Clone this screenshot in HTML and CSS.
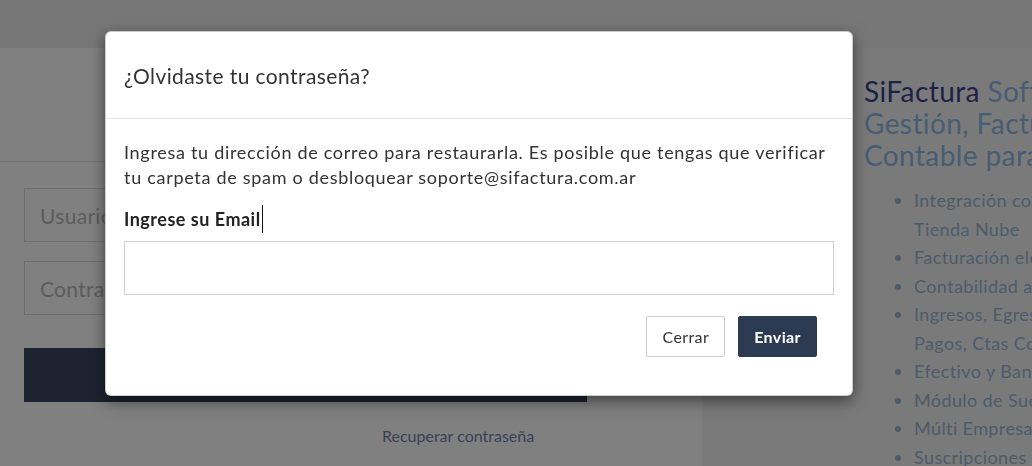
FILE: index.html
```html
<!DOCTYPE html>
<html lang="es">
<head>
  <meta charset="UTF-8" />
  <meta name="viewport" content="width=device-width, initial-scale=1" />
  <title>SiFactura - Ingresar</title>
  <link rel="stylesheet" href="styles.css">
</head>
<body>
  <!-- Página de fondo, ya oscurecida por el modal abierto -->
  <div class="page">
    <div class="topbar"></div>

    <div class="layout">
      <section class="login">
        <div class="login-logo"></div>
        <form class="login-form" onsubmit="return false">
          <input type="text" class="login-input" placeholder="Usuario" />
          <input type="password" class="login-input" placeholder="Contraseña" />
          <button class="login-button">Ingresar</button>
          <a href="#" class="login-link">Recuperar contraseña</a>
        </form>
      </section>

      <aside class="promo">
        <h2 class="promo-title"><span class="brand">SiFactura</span> Software de<br>Gestión, Facturación y<br>Contable para Pymes</h2>
        <ul class="promo-list">
          <li>Integración con Mercado Libre y<br>Tienda Nube</li>
          <li>Facturación electrónica AFIP</li>
          <li>Contabilidad automática</li>
          <li>Ingresos, Egresos, Cobranzas,<br>Pagos, Ctas Corrientes</li>
          <li>Efectivo y Bancos</li>
          <li>Módulo de Sueldos</li>
          <li>Múlti Empresa</li>
          <li>Suscripciones</li>
        </ul>
      </aside>
    </div>
  </div>

  <!-- Modal recuperar contraseña -->
  <div class="modal" role="dialog" aria-labelledby="modalTitle">
    <div class="modal-header">
      <h4 id="modalTitle" class="modal-title">¿Olvidaste tu contraseña?</h4>
    </div>
    <div class="modal-body">
      <p>Ingresa tu dirección de correo para restaurarla. Es posible que tengas que verificar tu carpeta de spam o desbloquear soporte@sifactura.com.ar</p>
      <label for="recoverEmail" class="modal-label">Ingrese su Email<span class="caret"></span></label>
      <input type="email" id="recoverEmail" class="modal-input" />
      <div class="modal-actions">
        <button class="btn btn-default">Cerrar</button>
        <button class="btn btn-primary">Enviar</button>
      </div>
    </div>
  </div>
</body>
</html>
```

FILE: styles.css
```css
* {
  box-sizing: border-box;
}

body {
  margin: 0;
  font-family: Lato, "Open Sans", sans-serif;
  background-color: #7a7a7a;
  color: #333;
  overflow: hidden;
  height: 466px;
}

/* Colores de fondo ya con el velo del modal aplicado */
.page {
  width: 100%;
  height: 466px;
  overflow: hidden;
}

.topbar {
  height: 48px;
  background-color: #777777;
}

.layout {
  display: flex;
  width: 1400px;
}

/* Panel de login */
.login {
  width: 702px;
  flex-shrink: 0;
  background-color: #808080;
  height: 418px;
}

.login-logo {
  height: 114px;
  border-bottom: 1px solid #737373;
}

.login-form {
  width: 563px;
  margin-left: 24px;
  padding-top: 26px;
  display: flex;
  flex-direction: column;
}

.login-input {
  height: 54px;
  border: 1px solid #6e6e6e;
  background-color: #808080;
  padding: 0 15px;
  font-family: inherit;
  font-size: 21px;
  letter-spacing: 0.3px;
  margin-bottom: 19px;
}

.login-input::placeholder {
  color: #5c5c5c;
}

.login-button {
  margin-top: 14px;
  height: 54px;
  border: none;
  background-color: #1d2330;
  color: #808080;
  font-family: inherit;
  font-size: 18px;
}

.login-link {
  margin-top: 24px;
  padding-left: 358px;
  white-space: nowrap;
  color: #3b3f57;
  font-size: 16px;
  text-decoration: none;
}

/* Columna derecha */
.promo {
  width: 420px;
  flex-shrink: 0;
  padding-left: 162px;
  padding-top: 27px;
}

.promo-title {
  margin: 0;
  font-weight: 400;
  font-size: 28px;
  letter-spacing: 0.4px;
  line-height: 32px;
  color: #475c75;
  white-space: nowrap;
}

.promo-title .brand {
  color: #1e2146;
}

.promo-list {
  margin: 15px 0 0;
  padding-left: 50px;
  color: #4d5b6b;
  font-size: 18px;
  letter-spacing: 0.4px;
  line-height: 28.5px;
  white-space: nowrap;
}

/* Modal */
.modal {
  position: fixed;
  top: 31px;
  left: 105px;
  width: 748px;
  background-color: white;
  border: 1px solid rgba(0, 0, 0, 0.2);
  border-radius: 6px;
  box-shadow: 0 5px 15px rgba(0, 0, 0, 0.5);
}

.modal-header {
  height: 87px;
  padding: 0 18px;
  display: flex;
  align-items: center;
  border-bottom: 1px solid #e5e5e5;
}

.modal-title {
  margin: 0;
  font-size: 21px;
  letter-spacing: 0.4px;
  font-weight: 400;
  color: #333;
}

.modal-body {
  padding: 21px 18px 38px;
}

.modal-body p {
  margin: 0 0 15px;
  font-size: 18px;
  letter-spacing: 0.7px;
  line-height: 25px;
  color: #333;
}

.modal-label {
  display: flex;
  align-items: center;
  margin-top: 1px;
  font-size: 18px;
  letter-spacing: 0.5px;
  font-weight: 700;
  line-height: 25px;
  color: #222;
}

.caret {
  display: inline-block;
  width: 1px;
  height: 28px;
  background-color: #111;
  margin-left: 1px;
}

.modal-input {
  display: block;
  width: 710px;
  height: 54px;
  margin-top: 8px;
  border: 1px solid #cfcfcf;
  font-family: inherit;
  font-size: 16px;
}

.modal-actions {
  display: flex;
  justify-content: flex-end;
  gap: 13px;
  margin-top: 21px;
  padding-right: 17px;
}

.btn {
  height: 41px;
  padding: 0 15px;
  font-family: inherit;
  font-size: 16px;
  letter-spacing: 0.4px;
  border-radius: 2px;
  cursor: pointer;
}

.btn-default {
  background-color: white;
  border: 1px solid #cccccc;
  color: #333;
}

.btn-primary {
  background-color: #2c3a52;
  border: 1px solid #2c3a52;
  color: white;
  font-weight: 700;
}
```
